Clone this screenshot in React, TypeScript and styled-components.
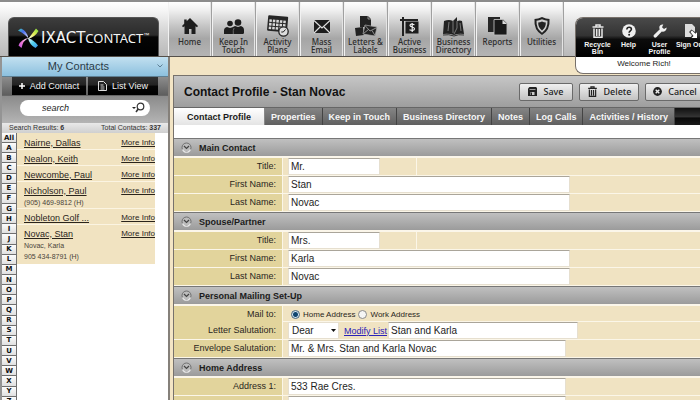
import React from "react";
import styled, { createGlobalStyle } from "styled-components";

const SANS = '"Liberation Sans", Arial, sans-serif';
const HUMANIST = '"Noto Sans", "Open Sans", sans-serif';

const GlobalStyle = createGlobalStyle`
  *, *::before, *::after { box-sizing: border-box; }
  html, body { margin: 0; height: 100%; overflow: hidden; background: #fff; }
  body { font-family: ${SANS}; font-size: 9px; color: #222; }
  button, input, select { font: inherit; margin: 0; }
`;

const Page = styled.div`
  display: flex;
  flex-direction: column;
  min-width: 720px;
  height: 100vh;
  overflow: hidden;
`;

/* ---------- header ---------- */

const Header = styled.header`
  flex: none;
  display: flex;
  height: 57px;
  border-top: 2px solid #8c8c8c;
  border-bottom: 1px solid #55504a;
  background: linear-gradient(#ffffff 0%, #f4f4f4 18%, #d0d0d0 60%, #b9b9b9 100%);
`;

const Brand = styled.div`
  flex: none;
  width: 168px;
  padding: 15px 9px 0 8px;
`;

const BrandPlate = styled.div`
  display: flex;
  align-items: center;
  height: 39px;
  padding: 2px 0 0 9px;
  border: 1px solid #555;
  border-bottom: 0;
  border-radius: 6px 6px 0 0;
  background: linear-gradient(#3d3d3d 0%, #2b2b2b 45%, #050505 50%, #000 100%);
  color: #f4f4f4;
`;

const BrandName = styled.span`
  margin-left: 2px;
  font: 15px/18px "DejaVu Sans", sans-serif;
  white-space: nowrap;
`;

const BrandNarrow = styled.span`
  font: 13px/18px ${HUMANIST};
`;

const BrandMark = styled.span`
  align-self: flex-start;
  margin-top: 11px;
  font-size: 6px;
  line-height: 8px;
`;

const Nav = styled.nav`
  display: flex;
`;

const NavItem = styled.a`
  display: flex;
  flex-direction: column;
  align-items: center;
  width: 44px;
  padding-top: 12px;
  border-right: 1px solid #a0a0a0;
  box-shadow: inset 1px 0 0 #f2f2f2, inset -1px 0 0 #e4e4e4;
  background: linear-gradient(#ffffff 0%, #f0f0f0 15%, #c4c4c4 45%, #a6a6a6 68%, #b4b4b4 100%);
  color: #2c2c2c;
  font: 500 8px/8px ${HUMANIST};
  text-align: center;
  text-decoration: none;
  white-space: pre;
`;

const NavIcon = styled.span`
  display: grid;
  place-items: center;
  height: 24px;
`;

const UserPanel = styled.section`
  position: relative;
  z-index: 2;
  margin: 15px 0 0 auto;
  width: 145px;
  height: 57px;
  border: 1px solid #77706a;
  border-right: 0;
  border-radius: 8px 0 0 8px;
  background: #fff;
  overflow: hidden;
`;

const UserActions = styled.div`
  display: flex;
  height: 39px;
  padding: 6px 0 0 6px;
  background: linear-gradient(#4a4a4a 0%, #333 45%, #0c0c0c 55%, #000 100%);
`;

const UserAction = styled.a`
  flex: none;
  width: 31px;
  display: flex;
  flex-direction: column;
  align-items: center;
  color: #f5f5f5;
  font: bold 7px/7px ${SANS};
  text-align: center;
  text-decoration: none;
  white-space: pre;
  svg { flex: none; margin-bottom: 3px; }
`;

const Welcome = styled.p`
  margin: 0;
  padding-right: 8px;
  font-size: 8px;
  line-height: 14px;
  text-align: center;
`;

/* ---------- body ---------- */

const Body = styled.div`
  flex: 1;
  min-height: 0;
  display: flex;
`;

const Sidebar = styled.aside`
  flex: none;
  width: 170px;
  display: flex;
  flex-direction: column;
  border-left: 2px solid #949494;
  border-right: 2px solid #85807a;
  background: #fff;
`;

const SidebarTitle = styled.h2`
  flex: none;
  display: flex;
  align-items: center;
  justify-content: flex-end;
  gap: 48px;
  height: 20px;
  margin: 0;
  padding: 0 5px 2px 0;
  background: linear-gradient(#c2e0f0, #8cc0de);
  border-bottom: 1px solid #5f7f92;
  color: #2b3b48;
  font-size: 11px;
  font-weight: normal;
`;

const SidebarButtons = styled.div`
  flex: none;
  display: grid;
  grid-template-columns: 74px 70px;
  gap: 2px;
  height: 18px;
  padding: 0 10px;
  background: linear-gradient(#8d8d8d, #5e5e5e);
`;

const DarkButton = styled.button`
  display: flex;
  align-items: center;
  justify-content: center;
  gap: 5px;
  padding: 0;
  border: 0;
  background: linear-gradient(#333 0%, #222 45%, #060606 50%, #000 100%);
  color: #f2f2f2;
  font-size: 9px;
`;

const SearchBar = styled.div`
  flex: none;
  height: 28px;
  padding: 4px 18px 0;
  border-top: 1px solid #666;
  background: linear-gradient(#8b8b8b, #b4b4b4);
`;

const SearchBox = styled.label`
  display: flex;
  align-items: center;
  height: 16px;
  padding: 0 5px 0 22px;
  border-radius: 8px;
  background: #fff;
`;

const SearchInput = styled.input`
  flex: 1;
  min-width: 0;
  padding: 0;
  border: 0;
  outline: 0;
  background: none;
  font-size: 9px;
  font-style: italic;
  color: #222;
  &::placeholder { color: #222; opacity: 1; }
`;

const Totals = styled.div`
  flex: none;
  display: flex;
  justify-content: space-between;
  height: 10px;
  padding: 0 7px;
  background: linear-gradient(#e9e9e9, #cfcfcf);
  color: #333;
  font-size: 7px;
  line-height: 9px;
`;

const ContactArea = styled.div`
  flex: 1;
  min-height: 0;
  display: flex;
  align-items: flex-start;
  overflow: hidden;
`;

const Alphabet = styled.div`
  flex: none;
  width: 15px;
  height: 274px;
  display: flex;
  flex-direction: column;
`;

const Letter = styled.button`
  flex: 1;
  min-height: 0;
  padding: 0;
  border: 1px solid #6f6f6f;
  border-width: 0 1px 1px 0;
  background: linear-gradient(#fdfdfd, #e0e0e0);
  color: #111;
  font: bold 7px/8px "DejaVu Sans", sans-serif;
`;

const ContactList = styled.ul`
  flex: none;
  width: 138px;
  margin: 0;
  padding: 0 0 2px;
  list-style: none;
  background: #f1e3c1;
`;

const Contact = styled.li`
  padding-left: 7px;
  & + & { box-shadow: inset 0 1px 0 #fbf4e2; }
`;

const ContactTop = styled.div`
  display: flex;
  justify-content: space-between;
  align-items: center;
  height: 16px;
  padding-top: 3px;
`;

const ContactName = styled.a`
  color: #2a241c;
  font-size: 9px;
`;

const MoreInfo = styled.a`
  color: #2a241c;
  font-size: 8px;
`;

const ContactLine = styled.div`
  color: #4a443a;
  font-size: 7px;
  line-height: 11px;
`;

/* ---------- profile ---------- */

const Main = styled.main`
  flex: 1;
  min-width: 0;
  padding: 18px 0 0 3px;
  background: #f3e5c5;
`;

const Panel = styled.section`
  height: 100%;
  border: 1px solid #77726c;
  border-width: 1px 0 0 1px;
  background: #f0e3c2;
  overflow: hidden;
`;

const TitleBar = styled.div`
  display: flex;
  align-items: center;
  gap: 6px;
  height: 31px;
  padding: 0 15px 0 10px;
  background: linear-gradient(#c6c6c6, #9e9e9e);
`;

const Title = styled.h1`
  flex: 1;
  margin: 0;
  color: #111;
  font-size: 12px;
`;

const ActionButton = styled.button<{ $width: number }>`
  display: flex;
  align-items: center;
  justify-content: center;
  gap: 6px;
  width: ${(p) => p.$width}px;
  height: 18px;
  padding: 0;
  border: 1px solid #6a6a6a;
  border-radius: 2px;
  background: linear-gradient(#f0f0f0, #c2c2c2);
  color: #1c1c1c;
  font: 500 9px/12px ${HUMANIST};
`;

const Tabs = styled.div`
  display: flex;
  height: 18px;
  border-top: 1px solid #666;
  background: linear-gradient(#111 0%, #333 50%, #0a0a0a 60%, #1a1a1a 100%);
`;

const Tab = styled.button<{ $active?: boolean }>`
  flex: none;
  padding: 0 ${(p) => (p.$active ? 13 : 6)}px;
  border: 0;
  border-right: 1px solid ${(p) => (p.$active ? "#888" : "#444")};
  background: ${(p) =>
    p.$active ? "linear-gradient(#ffffff, #e4e4e4)" : "linear-gradient(#858585, #606060)"};
  color: ${(p) => (p.$active ? "#1a1a1a" : "#f7f7f7")};
  font-weight: bold;
  font-size: 9px;
`;

const TabGap = styled.div`
  height: 13px;
  background: #fff;
`;

const SectionHead = styled.h3`
  display: flex;
  align-items: center;
  gap: 7px;
  height: 20px;
  margin: 0;
  padding-left: 7px;
  border-top: 1px solid #777;
  border-bottom: 2px solid #fbf6ea;
  background: linear-gradient(#c0c0c0, #9b9b9b) padding-box;
  color: #1b1b1b;
  font-size: 9px;
`;

const Row = styled.div<{ $short?: boolean }>`
  display: grid;
  grid-template-columns: 109px 1fr;
  height: ${(p) => (p.$short ? 16 : 18)}px;
  border-bottom: 1px solid #fbf6e8;
`;

const RowLabel = styled.label`
  padding-right: 6px;
  border-right: 1px solid #fbf6e8;
  background: #e2d49c;
  color: #2a261c;
  line-height: 17px;
  text-align: right;
`;

const Field = styled.div`
  display: flex;
  align-items: center;
  padding-left: 5px;
`;

const RadioGroup = styled(Field)`
  padding-left: 8px;
  gap: 3px;
`;

const TextInput = styled.input<{ $width: number }>`
  width: ${(p) => p.$width}px;
  height: 17px;
  padding: 0 2px;
  border: 1px solid #e6dfcf;
  border-top-color: #aaa59a;
  border-radius: 0;
  outline: 0;
  background: #fff;
  color: #1d1d1d;
  font-size: 10px;
`;

const TitleCell = styled.div`
  width: 129px;
  height: 17px;
  border-right: 1px solid #fbf6e8;
`;

const RadioLabel = styled.label`
  display: flex;
  align-items: center;
  gap: 3px;
  font-size: 8px;
  color: #2a261c;
`;

const Radio = styled.input`
  appearance: none;
  width: 9px;
  height: 9px;
  border: 1px solid #8a8a8a;
  border-radius: 50%;
  background: #f5f5f5;
  &:checked { background: radial-gradient(circle, #10466f 0 2px, #d5e6f2 3px); border-color: #47677e; }
`;

const SelectWrap = styled.div`
  display: grid;
  align-items: center;
  width: 51px;
  margin-right: 5px;
  > * { grid-area: 1 / 1; }
  svg { justify-self: end; margin-right: 3px; pointer-events: none; }
`;

const Select = styled.select`
  appearance: none;
  width: 100%;
  height: 17px;
  padding: 0 3px;
  border: 1px solid #e6dfcf;
  border-radius: 0;
  background: #fff;
  color: #1d1d1d;
  font-size: 10px;
`;

const ModifyLink = styled.a`
  width: 44px;
  color: #2a22b8;
  white-space: nowrap;
`;

/* ---------- drawings ---------- */

const LogoMark = () => (
  <svg width="21" height="21" viewBox="0 0 21 21">
    <defs>
      <linearGradient id="blade-a" x1="0" y1="0" x2="1" y2="1">
        <stop offset="0" stopColor="#3fd0b0" />
        <stop offset=".4" stopColor="#4a6ff0" />
        <stop offset="1" stopColor="#e4e2ff" />
      </linearGradient>
      <linearGradient id="blade-b" x1="1" y1="0" x2="0" y2="1">
        <stop offset="0" stopColor="#7fdc3a" />
        <stop offset=".5" stopColor="#e6ee58" />
        <stop offset="1" stopColor="#fff" />
      </linearGradient>
      <linearGradient id="blade-c" x1="1" y1="1" x2="0" y2="0">
        <stop offset="0" stopColor="#3a8fe8" />
        <stop offset=".5" stopColor="#53d2ee" />
        <stop offset="1" stopColor="#fff" />
      </linearGradient>
      <linearGradient id="blade-d" x1="0" y1="1" x2="1" y2="0">
        <stop offset="0" stopColor="#c24fe0" />
        <stop offset=".5" stopColor="#f07fd4" />
        <stop offset="1" stopColor="#fff" />
      </linearGradient>
    </defs>
    <path d="M0 2.500 3 .5Q9 3 10.500 10.500 7 6 0 2.500Z" fill="url(#blade-a)" />
    <path d="M18 .5 20.500 3Q17 9 10 11 14 6 18 .5Z" fill="url(#blade-b)" />
    <path d="M10 10Q16 12 20 17.500L17.500 20Q11.500 17 10 10Z" fill="url(#blade-c)" />
    <path d="M11 10Q5 12 3.500 20L.5 17.500Q3 11 11 10Z" fill="url(#blade-d)" />
  </svg>
);

const HomeIcon = () => (
  <svg width="18" height="18" viewBox="0 0 18 18" fill="#1d1d1d">
    <path d="M9 1 17 9l-1 1.300-1.500-1.100V17h-4v-5H8v5H3.500V9.200L2 10.300 1 9l2.200-2.300V2.500h2.500v1.800Z" />
  </svg>
);

const PeopleIcon = () => (
  <svg width="20" height="18" viewBox="0 0 20 18" fill="#1d1d1d">
    <circle cx="6" cy="6.500" r="2.800" />
    <circle cx="14" cy="5.500" r="3.300" />
    <path d="M0 17v-3.500Q0 10.500 3 10l3 1 2.500-.8L11 9l3 1 3-1q3 1 3 4v3.300L19 17Z" />
    <path d="M9.300 17q-.5-4 .8-6" stroke="#999" strokeWidth=".6" fill="none" />
  </svg>
);

const CalendarIcon = () => (
  <svg width="24" height="22" viewBox="0 0 24 22">
    <g transform="rotate(5 12 10)">
      <rect x="1.500" y="1" width="20" height="15.500" rx="1" fill="#262626" />
      {[0, 1, 2].map((r) =>
        [0, 1, 2, 3, 4].map((c) => (
          <rect key={`${r}-${c}`} x={3 + c * 3.5} y={5 + r * 3.6} width="2.500" height="2.600" fill="#d7d7d7" />
        ))
      )}
    </g>
    <circle cx="17.500" cy="16.500" r="4.700" fill="#ddd" stroke="#222" strokeWidth="1.300" />
    <path d="M19.500 14.500 17.300 17h-2" fill="none" stroke="#222" />
  </svg>
);

const MailIcon = () => (
  <svg width="18" height="17" viewBox="0 0 18 17">
    <rect x="1" y="2" width="16" height="13" fill="#1d1d1d" />
    <path d="M1 2.500 9 10l8-7.500M1 15l6-6M17 15l-6-6" fill="none" stroke="#ddd" strokeWidth="1.200" />
  </svg>
);

const LettersIcon = () => (
  <svg width="24" height="22" viewBox="0 0 24 22">
    <path d="M6 1h8l3 3v8H6Z" fill="#222" />
    <path d="M14 1v3h3" fill="none" stroke="#bbb" strokeWidth=".7" />
    <path d="m1 13 8-1 1 8-8 1Z" fill="#222" />
    <path d="m11 10 12 2-2 9-12-2Z" fill="#222" stroke="#aaa" strokeWidth=".7" />
    <path d="m11 10.500 5 5.500 7-3.500M9.500 18.500l5-4M21 20.500l-3-5" fill="none" stroke="#aaa" strokeWidth=".8" />
  </svg>
);

const SignIcon = () => (
  <svg width="20" height="21" viewBox="0 0 20 21">
    <path d="M2 1h2v2h14v2H4v15H2V5H0V3h2Z" fill="#222" />
    <rect x="5.500" y="5.500" width="13" height="12" fill="#1d1d1d" />
    <path d="M14.500 8.700q-4.500-1.500-4.500.8c0 2 4.500 1 4.500 3.200s-3 2-5 1M12.200 7v9" fill="none" stroke="#eee" strokeWidth="1.200" />
  </svg>
);

const DirectoryIcon = () => (
  <svg width="23" height="21" viewBox="0 0 23 21">
    <path d="M2 5q5-2 9 0l4-4v4q3-1 5 0l2 13q-5-1-10 1-5-2-11-1Z" fill="#222" />
    <path d="M11 5v12M7 6l-1 9M15 5v7l-3 6M18 7l1 8" fill="none" stroke="#8d8d8d" strokeWidth=".8" />
    <path d="M1 19q6-1 11 1 4-2 10-1" fill="none" stroke="#333" />
  </svg>
);

const ReportsIcon = () => (
  <svg width="21" height="20" viewBox="0 0 21 20">
    <path d="M1 1h12v15H1Z" fill="#262626" />
    <path d="M7 3.500h9l4 4V19H7Z" fill="#1a1a1a" stroke="#bbb" strokeWidth=".9" />
    <path d="M15.500 4v4H20" fill="#ddd" />
  </svg>
);

const ShieldIcon = () => (
  <svg width="18" height="20" viewBox="0 0 18 20">
    <path d="M9 1q4 2 7.500 2Q17.500 14 9 19 .5 14 1.500 3 5 3 9 1Z" fill="#222" />
    <path d="M9 3.300q3 1.300 5.500 1.500Q15 12.500 9 16.800 3 12.500 3.500 4.800 6 4.600 9 3.300Z" fill="#ccc" />
    <path d="M9 5.500q2 .9 3.800 1.100Q13 11.500 9 14.500 5 11.500 5.200 6.600 7 6.400 9 5.500Z" fill="#222" />
  </svg>
);

const TrashIcon = ({ size = 14, color = "#e8e8e8" }: { size?: number; color?: string }) => (
  <svg width={size} height={size} viewBox="0 0 14 14" fill="none" stroke={color}>
    <path d="M1.500 3h11M5 2.500V1h4v1.500" strokeWidth="1.500" />
    <path d="M3 4.500v8.700h8V4.500M5.700 5v7M8.300 5v7" strokeWidth="1.500" />
  </svg>
);

const HelpIcon = () => (
  <svg width="14" height="14" viewBox="0 0 14 14">
    <circle cx="7" cy="7" r="6.800" fill="#efefef" />
    <path d="M4.800 5.500Q5 3.300 7.200 3.300T9.400 5.300C9.400 6.800 7.100 7 7.100 8.800" fill="none" stroke="#222" strokeWidth="1.600" />
    <circle cx="7.100" cy="10.800" r="1" fill="#222" />
  </svg>
);

const WrenchIcon = () => (
  <svg width="14" height="14" viewBox="0 0 14 14">
    <path d="M13.500 3.500 11 5 9 3.200 10.300.6Q7.500 0 6.500 2.300 6 4 6.800 5.300L.9 11q-.8 1.300.2 2.200t2.200.1L8.800 7.500q2 .5 3.600-.8 1.500-1.500 1.100-3.200Z" fill="#efefef" />
  </svg>
);

const SignOutIcon = () => (
  <svg width="14" height="14" viewBox="0 0 14 14">
    <path d="M1 0h7l3 3v5L7.500 5.500 5 8l3 3-1 2H1Z" fill="#dcdcdc" />
    <path d="M6.500 8 8 6.500l3.500 3.300L13 8.300V14H7.500L9.500 12Z" fill="#fff" />
  </svg>
);

const PageIcon = () => (
  <svg width="9" height="10" viewBox="0 0 9 10" fill="none" stroke="#ddd">
    <path d="M.5.500h5l3 3v6h-8ZM2.500 4h3M2.500 6h4M2.500 8h4" />
  </svg>
);

const PlusIcon = () => (
  <svg width="6" height="6" viewBox="0 0 6 6" stroke="#fff" strokeWidth="1.500">
    <path d="M3 0v6M0 3h6" />
  </svg>
);

const SearchIcon = () => (
  <svg width="13" height="12" viewBox="0 0 13 12">
    <path d="M0 5h4L2 7Z" fill="#222" />
    <circle cx="8.500" cy="4.500" r="3.300" fill="none" stroke="#333" strokeWidth="1.200" />
    <path d="M6.200 7 4 10" stroke="#333" strokeWidth="1.600" />
  </svg>
);

const ChevronIcon = () => (
  <svg width="6" height="4" viewBox="0 0 6 4">
    <path d="m.5.500 2.500 2.500L5.500.5" fill="none" stroke="#5d7f95" />
  </svg>
);

const CollapseIcon = () => (
  <svg width="11" height="11" viewBox="0 0 11 11">
    <circle cx="5.500" cy="5.500" r="4.500" fill="#bcbcbc" stroke="#666" strokeWidth=".9" />
    <path d="M1.500 7.500a4.300 4.300 0 0 0 8 0" fill="none" stroke="#eee" strokeWidth="1.100" />
    <path d="m3 4 2.500 2.500L8 4" fill="none" stroke="#444" strokeWidth="1.200" />
  </svg>
);

const SaveIcon = () => (
  <svg width="9" height="9" viewBox="0 0 9 9">
    <path d="M0 1.500 1.500 0H8l1 1v8H0Z" fill="#222" />
    <path d="M1.500 2.500h6" stroke="#bbb" strokeWidth=".8" />
    <path d="M2.500 5h4v3h-4Z" fill="#ccc" />
    <path d="M3.500 5.500V8" stroke="#222" />
  </svg>
);

const CancelIcon = () => (
  <svg width="9" height="9" viewBox="0 0 9 9">
    <circle cx="4.500" cy="4.500" r="4.400" fill="#222" />
    <path d="m2.700 2.700 3.600 3.600m0-3.600L2.700 6.300" stroke="#eee" strokeWidth="1.400" />
  </svg>
);

/* ---------- data ---------- */

const NAV: [string, () => React.JSX.Element][] = [
  ["Home", HomeIcon],
  ["Keep In\nTouch", PeopleIcon],
  ["Activity\nPlans", CalendarIcon],
  ["Mass\nEmail", MailIcon],
  ["Letters &\nLabels", LettersIcon],
  ["Active\nBusiness", SignIcon],
  ["Business\nDirectory", DirectoryIcon],
  ["Reports", ReportsIcon],
  ["Utilities", ShieldIcon],
];

const CONTACTS = [
  { name: "Nairne, Dallas", lines: [] },
  { name: "Nealon, Keith", lines: [] },
  { name: "Newcombe, Paul", lines: [] },
  { name: "Nicholson, Paul", lines: ["(905) 469-9812 (H)"] },
  { name: "Nobleton Golf ...", lines: [] },
  { name: "Novac, Stan", lines: ["Novac, Karla", "905 434-8791 (H)"] },
];

const TABS = ["Contact Profile", "Properties", "Keep in Touch", "Business Directory", "Notes", "Log Calls", "Activities / History"];
const LETTERS = ["All", ..."ABCDEFGHIJKLMNOPQRSTUVWXYZ"];

function TextRow({ id, label, value, width }: { id: string; label: string; value: string; width: number }) {
  return (
    <Row>
      <RowLabel htmlFor={id}>{label}</RowLabel>
      <Field>
        <TextInput id={id} defaultValue={value} $width={width} />
      </Field>
    </Row>
  );
}

function PersonSection({ id, heading, title, first, last }: Record<"id" | "heading" | "title" | "first" | "last", string>) {
  return (
    <section>
      <SectionHead><CollapseIcon />{heading}</SectionHead>
      <Row>
        <RowLabel htmlFor={`${id}-title`}>Title:</RowLabel>
        <Field>
          <TitleCell>
            <TextInput id={`${id}-title`} defaultValue={title} $width={92} />
          </TitleCell>
        </Field>
      </Row>
      <TextRow id={`${id}-first`} label="First Name:" value={first} width={282} />
      <TextRow id={`${id}-last`} label="Last Name:" value={last} width={282} />
    </section>
  );
}

export default function App() {
  return (
    <>
      <GlobalStyle />
      <Page>
        <Header>
          <Brand>
            <BrandPlate>
              <LogoMark />
              <BrandName>IXACT<BrandNarrow>CONTACT</BrandNarrow></BrandName>
              <BrandMark>™</BrandMark>
            </BrandPlate>
          </Brand>
          <Nav>
            {NAV.map(([label, Icon]) => (
              <NavItem href="#" key={label}>
                <NavIcon><Icon /></NavIcon>
                {label}
              </NavItem>
            ))}
          </Nav>
          <UserPanel>
            <UserActions>
              <UserAction href="#"><TrashIcon />{"Recycle\nBin"}</UserAction>
              <UserAction href="#"><HelpIcon />Help</UserAction>
              <UserAction href="#"><WrenchIcon />{"User\nProfile"}</UserAction>
              <UserAction href="#"><SignOutIcon />Sign Out</UserAction>
            </UserActions>
            <Welcome>Welcome Rich!</Welcome>
          </UserPanel>
        </Header>
        <Body>
          <Sidebar>
            <SidebarTitle>My Contacts<ChevronIcon /></SidebarTitle>
            <SidebarButtons>
              <DarkButton><PlusIcon />Add Contact</DarkButton>
              <DarkButton><PageIcon />List View</DarkButton>
            </SidebarButtons>
            <SearchBar>
              <SearchBox>
                <SearchInput placeholder="search" aria-label="search" />
                <SearchIcon />
              </SearchBox>
            </SearchBar>
            <Totals>
              <span>Search Results: <b>6</b></span>
              <span>Total Contacts: <b>337</b></span>
            </Totals>
            <ContactArea>
              <Alphabet>
                {LETTERS.map((l) => <Letter key={l}>{l}</Letter>)}
              </Alphabet>
              <ContactList>
                {CONTACTS.map((c) => (
                  <Contact key={c.name}>
                    <ContactTop>
                      <ContactName href="#">{c.name}</ContactName>
                      <MoreInfo href="#">More Info</MoreInfo>
                    </ContactTop>
                    {c.lines.map((l) => <ContactLine key={l}>{l}</ContactLine>)}
                  </Contact>
                ))}
              </ContactList>
            </ContactArea>
          </Sidebar>
          <Main>
            <Panel>
              <TitleBar>
                <Title>Contact Profile - Stan Novac</Title>
                <ActionButton $width={54}><SaveIcon />Save</ActionButton>
                <ActionButton $width={60}><TrashIcon size={11} color="#222" />Delete</ActionButton>
                <ActionButton $width={60}><CancelIcon />Cancel</ActionButton>
              </TitleBar>
              <Tabs>
                {TABS.map((t, i) => <Tab key={t} $active={i === 0}>{t}</Tab>)}
              </Tabs>
              <TabGap />
              <PersonSection id="main" heading="Main Contact" title="Mr." first="Stan" last="Novac" />
              <PersonSection id="spouse" heading="Spouse/Partner" title="Mrs." first="Karla" last="Novac" />
              <section>
                <SectionHead><CollapseIcon />Personal Mailing Set-Up</SectionHead>
                <Row $short>
                  <RowLabel as="span" id="mail-to">Mail to:</RowLabel>
                  <RadioGroup role="radiogroup" aria-labelledby="mail-to">
                    <RadioLabel><Radio type="radio" name="mail" defaultChecked />Home Address</RadioLabel>
                    <RadioLabel><Radio type="radio" name="mail" />Work Address</RadioLabel>
                  </RadioGroup>
                </Row>
                <Row>
                  <RowLabel htmlFor="letter">Letter Salutation:</RowLabel>
                  <Field>
                    <SelectWrap>
                      <Select id="letter"><option>Dear</option></Select>
                      <svg width="5" height="3" viewBox="0 0 5 3"><path d="M0 0h5L2.500 3Z" fill="#111" /></svg>
                    </SelectWrap>
                    <ModifyLink href="#">Modify List</ModifyLink>
                    <TextInput aria-label="Letter names" defaultValue="Stan and Karla" $width={190} />
                  </Field>
                </Row>
                <TextRow id="envelope" label="Envelope Salutation:" value="Mr. &amp; Mrs. Stan and Karla Novac" width={278} />
              </section>
              <section>
                <SectionHead><CollapseIcon />Home Address</SectionHead>
                <TextRow id="address1" label="Address 1:" value="533 Rae Cres." width={278} />
                <TextRow id="address2" label="Address 2:" value="" width={278} />
              </section>
            </Panel>
          </Main>
        </Body>
      </Page>
    </>
  );
}
